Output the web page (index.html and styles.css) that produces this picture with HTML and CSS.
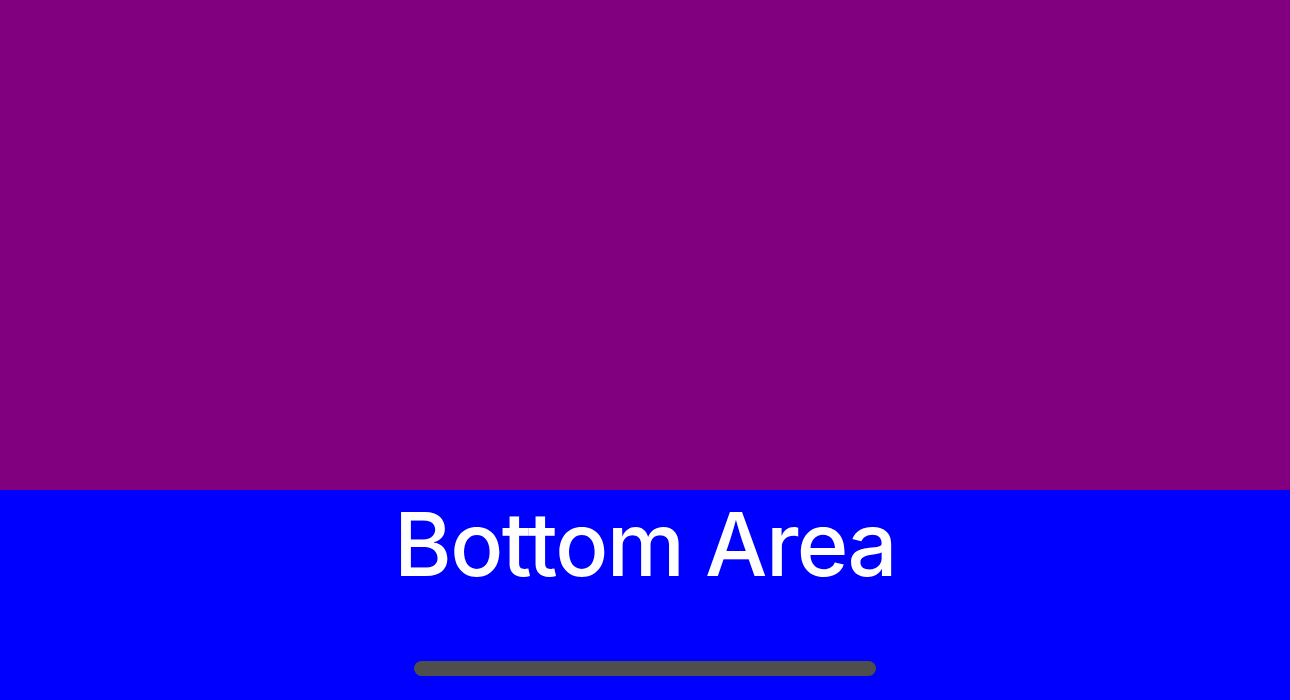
FILE: index.html
```html
<!DOCTYPE html>
<html>
<head>
<meta charset="utf-8">
<link rel="stylesheet" href="styles.css">
</head>
<body>
<div class="screen">
  <div class="top"></div>
  <div class="bottom">
    <div class="title">Bottom Area</div>
    <div class="indicator"></div>
  </div>
</div>
</body>
</html>
```
FILE: styles.css
```css
html, body {
  margin: 0;
  padding: 0;
  width: 1290px;
  height: 700px;
  overflow: hidden;
}
.screen {
  display: flex;
  flex-direction: column;
  height: 700px;
}
.top {
  flex: 1;
  background: #800080;
}
.bottom {
  height: 210px;
  background: #0000ff;
  display: flex;
  flex-direction: column;
  align-items: center;
}
.title {
  font-family: Inter, "Noto Sans", sans-serif;
  font-size: 88px;
  font-weight: 450;
  line-height: 106px;
  color: #ffffff;
  margin-top: 1px;
  letter-spacing: -1.6px;
}
.indicator {
  margin-top: 64px;
  width: 462px;
  height: 15px;
  border-radius: 8px;
  background: #4e4e4e;
}
```
